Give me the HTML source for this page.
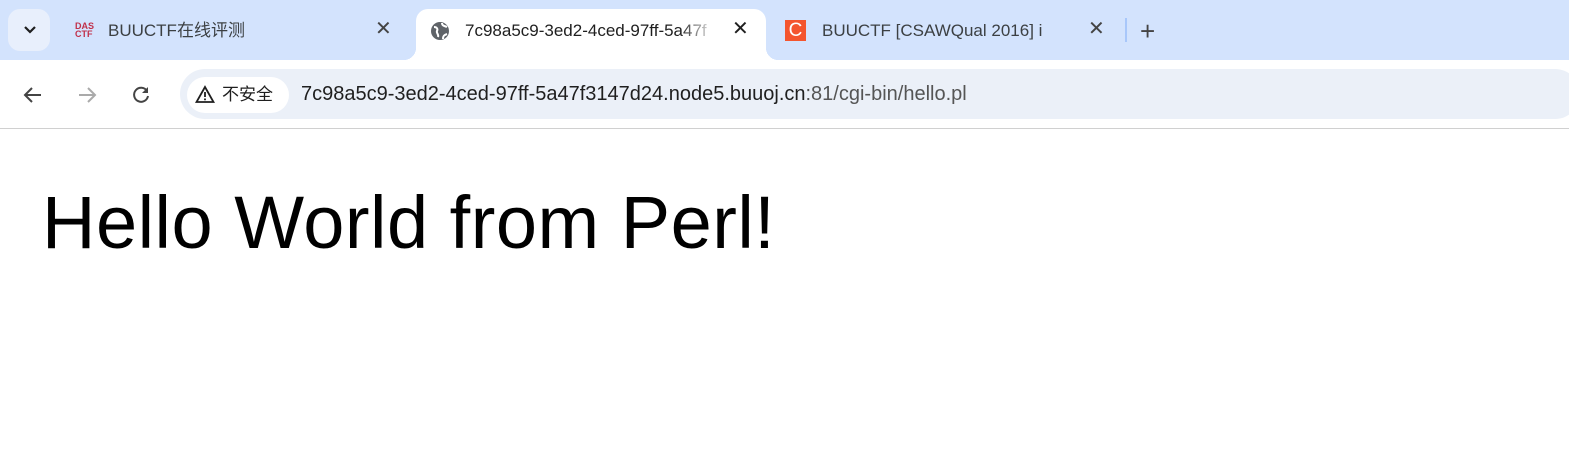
<!DOCTYPE html>
<html><head><meta charset="utf-8"><style>
*{margin:0;padding:0;box-sizing:border-box}
body{width:1569px;height:473px;overflow:hidden;background:#fff;font-family:"Liberation Sans","Noto Sans CJK SC",sans-serif;position:relative}
.tabbar{position:absolute;left:0;top:0;width:1569px;height:60px;background:#d3e3fd}
.ab{position:absolute}
.toolbar{position:absolute;left:0;top:60px;width:1569px;height:69px;background:#fff;border-bottom:1px solid #d0d0d0}
.tab{position:absolute;font-size:17px;line-height:20px;color:#333;white-space:nowrap}
</style></head><body>
<div class="tabbar"></div>
<div class="ab" style="left:8px;top:9px;width:42px;height:42px;border-radius:12px;background:#e8effc"></div>
<svg class="ab" style="left:22px;top:24px" width="16" height="12"><path d="M3 3l5 5 5-5" stroke="#1f1f1f" stroke-width="2.2" fill="none"/></svg>
<div class="tab" style="left:75px;top:22px;font-size:9px;color:#c0304a;font-weight:bold;line-height:8px">DAS<br>CTF</div>
<div class="tab" style="left:108px;top:21px;color:#3c4043">BUUCTF在线评测</div>
<div class="tab" style="left:375px;top:19px;font-size:20px;color:#444">✕</div>
<div class="ab" style="left:416px;top:9px;width:350px;height:55px;background:#fff;border-radius:12px 12px 0 0"></div>
<div class="ab" style="left:404px;top:48px;width:12px;height:12px;background:radial-gradient(circle at 0 0,#d3e3fd 12px,#fff 12px)"></div>
<div class="ab" style="left:766px;top:48px;width:12px;height:12px;background:radial-gradient(circle at 100% 0,#d3e3fd 12px,#fff 12px)"></div>
<svg class="ab" style="left:430px;top:21px" width="20" height="20" viewBox="0 0 20 20"><circle cx="10" cy="10" r="9" fill="#5f6368"/><path d="M4 6c3 0 4 2 3 4s2 3 1 6M12 2c0 3 3 3 5 4M13 18c0-3 1-4 4-5" stroke="#fff" stroke-width="2" fill="none"/></svg>
<div class="tab" style="left:465px;top:21px;color:#1f1f1f;width:250px;overflow:hidden;-webkit-mask-image:linear-gradient(90deg,#000 215px,transparent 250px)">7c98a5c9-3ed2-4ced-97ff-5a47f</div>
<div class="tab" style="left:732px;top:19px;font-size:20px;color:#1f1f1f">✕</div>
<div class="ab" style="left:785px;top:20px;width:21px;height:21px;background:#f4552e;color:#fff;font-size:19px;text-align:center;line-height:21px">C</div>
<div class="tab" style="left:822px;top:21px;color:#3c4043;width:250px;overflow:hidden;-webkit-mask-image:linear-gradient(90deg,#000 220px,transparent 250px)">BUUCTF [CSAWQual 2016] i</div>
<div class="tab" style="left:1088px;top:19px;font-size:20px;color:#444">✕</div>
<div class="ab" style="left:1125px;top:18px;width:2px;height:24px;background:#a8c7fa"></div>
<div class="tab" style="left:1140px;top:18px;font-size:26px;line-height:26px;color:#444">+</div>
<div class="toolbar"></div>
<svg class="ab" style="left:22px;top:84px" width="22" height="22" viewBox="0 0 22 22"><path d="M19 11H4M10 4l-7 7 7 7" stroke="#444" stroke-width="2" fill="none"/></svg>
<svg class="ab" style="left:76px;top:84px" width="22" height="22" viewBox="0 0 22 22"><path d="M3 11h15M12 4l7 7-7 7" stroke="#aaa" stroke-width="2" fill="none"/></svg>
<svg class="ab" style="left:130px;top:84px" width="22" height="22" viewBox="0 0 22 22"><path d="M17 7A7 7 0 1 0 18 12" stroke="#444" stroke-width="2" fill="none"/><path d="M18 3v6h-6z" fill="#444"/></svg>
<div class="ab" style="left:180px;top:69px;width:1400px;height:50px;border-radius:25px;background:#ebf0f8"></div>
<div class="ab" style="left:187px;top:77px;width:102px;height:36px;border-radius:18px;background:#fff"></div>
<svg class="ab" style="left:195px;top:85px" width="20" height="18" viewBox="0 0 20 18"><path d="M10 2L1.5 17h17z" stroke="#1f1f1f" stroke-width="1.8" fill="none"/><path d="M10 7v5M10 13.5v1.8" stroke="#1f1f1f" stroke-width="1.8"/></svg>
<div class="tab" style="left:222px;top:85px;color:#1f1f1f;font-size:17px;line-height:20px">不安全</div>
<div class="tab" style="left:301px;top:82px;color:#1f1f1f;font-size:20px;line-height:24px">7c98a5c9-3ed2-4ced-97ff-5a47f3147d24.node5.buuoj.cn<span style="color:#555">:81/cgi-bin/hello.pl</span></div>
<div class="ab" style="left:42px;top:181px;font-size:74px;line-height:84px;color:#000;letter-spacing:0.5px;white-space:nowrap">Hello World from Perl!</div>
</body></html>
